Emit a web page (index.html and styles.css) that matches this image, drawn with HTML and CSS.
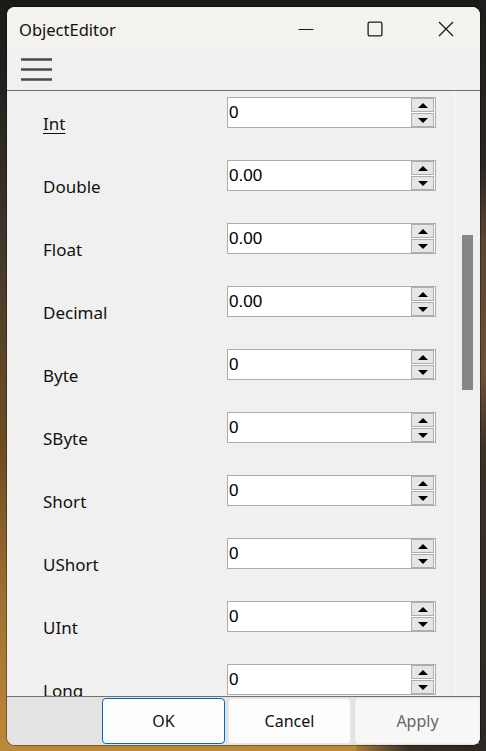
FILE: index.html
```html
<!DOCTYPE html>
<html>
<head>
<meta charset="utf-8">
<title>ObjectEditor</title>
<link rel="stylesheet" href="styles.css">
</head>
<body>
<div class="window">
  <div class="titlebar">
    <span class="title">ObjectEditor</span>
    <div class="caption-buttons">
      <span class="cap-btn">
        <svg width="16" height="16" viewBox="0 0 16 16"><path d="M0.5 8.5H15.5" stroke="#1a1a1a" stroke-width="1.2"/></svg>
      </span>
      <span class="cap-btn cap-max">
        <svg width="16" height="16" viewBox="0 0 16 16"><rect x="1.1" y="1.1" width="13.8" height="13.8" rx="1.6" fill="none" stroke="#1a1a1a" stroke-width="1.3"/></svg>
      </span>
      <span class="cap-btn cap-close">
        <svg width="16" height="16" viewBox="0 0 16 16"><path d="M1 1L15 15M15 1L1 15" stroke="#1a1a1a" stroke-width="1.3"/></svg>
      </span>
    </div>
  </div>
  <div class="toolbar">
    <svg class="hamburger" width="31" height="24" viewBox="0 0 31 24"><path d="M0 1.5H31M0 11.5H31M0 21.5H31" stroke="#4a4a4a" stroke-width="2.6"/></svg>
  </div>
  <div class="content">
    <div class="fields">
      <div class="row"><span class="label"><u>Int</u></span><div class="spin"><span class="value">0</span><div class="spin-btns"><span class="sb"><i class="up"></i></span><span class="sb"><i class="down"></i></span></div></div></div>
      <div class="row"><span class="label">Double</span><div class="spin"><span class="value">0.00</span><div class="spin-btns"><span class="sb"><i class="up"></i></span><span class="sb"><i class="down"></i></span></div></div></div>
      <div class="row"><span class="label">Float</span><div class="spin"><span class="value">0.00</span><div class="spin-btns"><span class="sb"><i class="up"></i></span><span class="sb"><i class="down"></i></span></div></div></div>
      <div class="row"><span class="label">Decimal</span><div class="spin"><span class="value">0.00</span><div class="spin-btns"><span class="sb"><i class="up"></i></span><span class="sb"><i class="down"></i></span></div></div></div>
      <div class="row"><span class="label">Byte</span><div class="spin"><span class="value">0</span><div class="spin-btns"><span class="sb"><i class="up"></i></span><span class="sb"><i class="down"></i></span></div></div></div>
      <div class="row"><span class="label">SByte</span><div class="spin"><span class="value">0</span><div class="spin-btns"><span class="sb"><i class="up"></i></span><span class="sb"><i class="down"></i></span></div></div></div>
      <div class="row"><span class="label">Short</span><div class="spin"><span class="value">0</span><div class="spin-btns"><span class="sb"><i class="up"></i></span><span class="sb"><i class="down"></i></span></div></div></div>
      <div class="row"><span class="label">UShort</span><div class="spin"><span class="value">0</span><div class="spin-btns"><span class="sb"><i class="up"></i></span><span class="sb"><i class="down"></i></span></div></div></div>
      <div class="row"><span class="label">UInt</span><div class="spin"><span class="value">0</span><div class="spin-btns"><span class="sb"><i class="up"></i></span><span class="sb"><i class="down"></i></span></div></div></div>
      <div class="row"><span class="label">Long</span><div class="spin"><span class="value">0</span><div class="spin-btns"><span class="sb"><i class="up"></i></span><span class="sb"><i class="down"></i></span></div></div></div>
    </div>
    <div class="scrollbar"><div class="thumb"></div></div>
  </div>
  <div class="buttonbar">
    <span class="btn btn-ok">OK</span>
    <span class="btn">Cancel</span>
    <span class="btn btn-apply">Apply</span>
  </div>
</div>
</body>
</html>
```

FILE: styles.css
```css
html, body {
  margin: 0;
  padding: 0;
}
body {
  width: 486px;
  height: 751px;
  overflow: hidden;
  background:
    linear-gradient(to bottom, #1e1d1b 0%, #2a2622 22%, #5a4632 32%, #6a5038 50%, #3a3229 60%, #2c2824 100%) right 0 top 0 / 7px 751px no-repeat,
    linear-gradient(to right, #a57a34, #3a3026 40%, #2a2620 100%) right 0 bottom 0 / 130px 7px no-repeat,
    linear-gradient(to bottom, #1b1a18 0%, #24221f 12%, #3d342a 30%, #5e4628 48%, #6d4c22 60%, #a07030 80%, #bb8a3a 100%);
  font-family: "Noto Sans", "Open Sans", sans-serif;
}
.window {
  margin: 7px 0 0 7px;
  width: 473px;
  height: 738px;
  border-radius: 8px;
  overflow: hidden;
  background: #f0f0f0;
  display: flex;
  flex-direction: column;
  box-shadow: 0 0 0 1px rgba(0,0,0,0.35);
}
.titlebar {
  height: 43px;
  flex: none;
  background: #f3f2ef;
  display: flex;
  align-items: center;
  justify-content: space-between;
}
.title {
  margin-left: 12px;
  font-size: 16.5px;
  color: #111;
  margin-top: 1px;
}
.caption-buttons {
  display: flex;
  align-items: center;
  margin-right: 26px;
}
.cap-btn {
  display: flex;
  width: 16px;
  height: 16px;
}
.cap-max {
  margin-left: 53px;
}
.cap-close {
  margin-left: 55px;
}
.toolbar {
  height: 40px;
  flex: none;
  background: #f0f0f0;
  border-bottom: 1px solid #707070;
  display: flex;
  align-items: center;
}
.hamburger {
  margin-left: 14px;
}
.content {
  flex: 1;
  min-height: 0;
  display: flex;
  border-bottom: 1px solid #707070;
}
.fields {
  flex: 1;
  overflow: hidden;
  padding-top: 6px;
  border-right: 1px solid #fbfbfb;
  margin-left: 1px;
}
.row {
  height: 63px;
  display: flex;
  align-items: flex-start;
}
.label {
  width: 184px;
  padding-left: 35px;
  padding-top: 17px;
  line-height: 20px;
  font-size: 17px;
  color: #111;
  flex: none;
}
.label u {
  text-decoration-thickness: 1px;
  text-underline-offset: 3px;
}
.spin {
  width: 207px;
  height: 29px;
  border: 1px solid #acacac;
  background: #fff;
  display: flex;
  align-items: center;
  justify-content: space-between;
}
.value {
  font-family: "Liberation Sans", Arial, sans-serif;
  font-size: 17px;
  color: #000;
  margin-left: 1px;
  margin-top: 1px;
}
.spin-btns {
  display: flex;
  flex-direction: column;
  gap: 1px;
  margin-right: 1px;
}
.sb {
  width: 21px;
  height: 12px;
  background: #e6e6e6;
  border: 1px solid #adadad;
  display: flex;
  align-items: center;
  justify-content: center;
}
.sb i {
  width: 0;
  height: 0;
  border-left: 5px solid transparent;
  border-right: 5px solid transparent;
}
.sb .up {
  border-bottom: 5px solid #000;
}
.sb .down {
  border-top: 5px solid #000;
}
.scrollbar {
  width: 25px;
  flex: none;
  background: #f0f0f0;
  position: relative;
}
.thumb {
  position: absolute;
  left: 7px;
  top: 144px;
  width: 11px;
  height: 155px;
  background: #868686;
}
.buttonbar {
  height: 48px;
  flex: none;
  background: #e3e3e3;
  display: flex;
  justify-content: flex-end;
  align-items: flex-start;
  padding-top: 1px;
  box-sizing: border-box;
  gap: 3px;
}
.btn {
  width: 121px;
  height: 44px;
  background: #fdfdfd;
  border: 1px solid #e6e6e6;
  border-radius: 4px;
  display: flex;
  align-items: center;
  justify-content: center;
  font-size: 16px;
  color: #111;
}
.btn-ok {
  border-color: #0067c0;
}
.btn-apply {
  width: 123px;
  background: #f7f7f7;
  border-color: #f0f0f0;
  color: #666;
  border-radius: 4px 0 0 4px;
  margin-left: 1px;
}
```
